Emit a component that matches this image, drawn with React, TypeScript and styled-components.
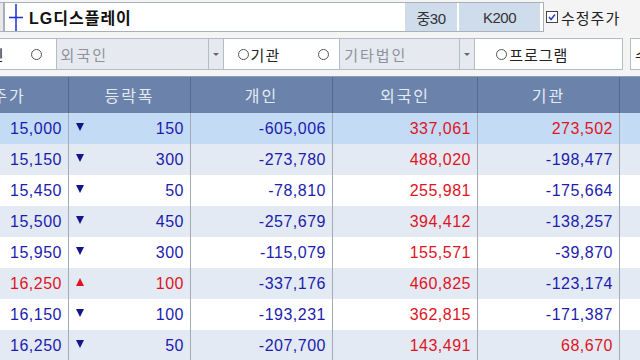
import React from 'react'
import styled, { createGlobalStyle } from 'styled-components'

const GlobalStyle = createGlobalStyle`
    html, body {
        margin: 0;
        padding: 0;
        width: 640px;
        height: 360px;
        overflow: hidden;
        background: #f4f4f4;
        font-family: 'Liberation Sans', 'Noto Sans CJK KR', sans-serif;
    }
`

const Page = styled.div`
    margin-left: -50px;
    width: 760px;
`

const TopBar = styled.div`
    display: flex;
    align-items: center;
    height: 30px;
    padding-top: 2px;
`

const SpinButton = styled.div`
    width: 52px;
    height: 28px;
    background: #e6e8eb;
    border: 1px solid #a9b0b8;
    position: relative;
    &::after {
        content: '';
        position: absolute;
        right: 3px;
        top: 12px;
        border-left: 3px solid #333;
        border-top: 2px solid transparent;
        border-bottom: 2px solid transparent;
    }
`

const InputBox = styled.div`
    box-sizing: border-box;
    width: 540px;
    height: 30px;
    border: 1px solid #a9b0b8;
    background: #fff;
    display: flex;
    align-items: center;
    padding-right: 3px;
`

const StockName = styled.span`
    flex: 1;
    margin-left: 5px;
    font-weight: bold;
    font-size: 16px;
    letter-spacing: 1px;
    color: #111;
`

const IndexButton = styled.div<{ $width: number }>`
    width: ${(p) => p.$width}px;
    height: 28px;
    margin-left: 2px;
    background: #cfdcec;
    display: flex;
    align-items: center;
    justify-content: center;
    font-size: 15px;
    color: #333;
    letter-spacing: -0.5px;
`

const CheckLabel = styled.label`
    display: flex;
    align-items: center;
    margin-left: 2px;
    font-family: 'Noto Sans CJK KR', sans-serif;
    font-size: 15px;
    letter-spacing: 1px;
    color: #222;
`

const CheckBox = styled.span`
    box-sizing: border-box;
    width: 12px;
    height: 12px;
    border: 1px solid #444;
    background: #fff;
    margin-right: 3px;
    display: flex;
    align-items: center;
    justify-content: center;
`

const FilterRow = styled.div`
    display: flex;
    margin-top: 6px;
    height: 32px;
`

const FilterBar = styled.div`
    box-sizing: border-box;
    width: 673px;
    height: 32px;
    border: 1px solid #b4bcc6;
    background: #fff;
    display: flex;
    align-items: stretch;
    font-family: 'Noto Sans CJK KR', sans-serif;
    font-size: 15px;
    color: #222;
`

const FilterItem = styled.div<{ $gap: number }>`
    display: flex;
    align-items: center;
    margin-left: ${(p) => p.$gap}px;
    letter-spacing: 1px;
`

const Radio = styled.span`
    box-sizing: border-box;
    width: 11px;
    height: 11px;
    border: 1px solid #555;
    border-radius: 50%;
    margin-right: 2px;
`

const Select = styled.div<{ $width: number; $gap: number }>`
    box-sizing: border-box;
    width: ${(p) => p.$width}px;
    margin-left: ${(p) => p.$gap}px;
    background: #e6eaf0;
    border-left: 1px solid #b4bcc6;
    display: flex;
    align-items: center;
    padding-left: 4px;
    color: #8d929b;
    letter-spacing: 2px;
`

const SelectArrow = styled.div`
    box-sizing: border-box;
    width: 16px;
    background: #e6eaf0;
    border-left: 1px solid #b4bcc6;
    border-right: 1px solid #b4bcc6;
    display: flex;
    align-items: center;
    justify-content: center;
    &::after {
        content: '';
        border-top: 3px solid #666;
        border-left: 3px solid transparent;
        border-right: 3px solid transparent;
    }
`

const ExtraBox = styled.div`
    box-sizing: border-box;
    margin-left: 7px;
    width: 80px;
    height: 32px;
    border: 1px solid #b4bcc6;
    background: #fff;
    display: flex;
    align-items: center;
    padding-left: 4px;
    font-family: 'Noto Sans CJK KR', sans-serif;
    font-size: 15px;
    color: #222;
`

const COLS = '119px 122px 142px 145px 142px 90px'

const HeaderRow = styled.div`
    display: grid;
    grid-template-columns: ${COLS};
    margin-top: 6px;
    height: 36px;
    background: #6b82aa;
    border-top: 1px solid #8e9cb4;
`

const HeaderCell = styled.div`
    display: flex;
    align-items: center;
    justify-content: center;
    border-right: 1px solid #566a90;
    font-family: 'Noto Sans CJK KR', sans-serif;
    font-size: 16px;
    letter-spacing: 2px;
    color: #e4eaf4;
`

const Row = styled.div<{ $bg: string }>`
    display: grid;
    grid-template-columns: ${COLS};
    height: 31px;
    background: ${(p) => p.$bg};
`

const Cell = styled.div<{ $color?: string }>`
    box-sizing: border-box;
    display: flex;
    align-items: center;
    justify-content: flex-end;
    padding-right: 6px;
    border-right: 1px solid #a3aab6;
    font-size: 16px;
    letter-spacing: 0.5px;
    color: ${(p) => p.$color || '#1c1cae'};
`

const ChangeCell = styled(Cell)`
    justify-content: space-between;
    padding-left: 7px;
`

const Arrow = styled.span<{ $up: boolean }>`
    align-self: flex-start;
    margin-top: 10px;
    border-left: 4px solid transparent;
    border-right: 4px solid transparent;
    ${(p) =>
        p.$up
            ? 'border-bottom: 8px solid #e0141e;'
            : 'border-top: 8px solid #14148f;'}
`

const BLUE = '#1c1cae'
const RED = '#e0141e'

interface RowData {
    price: string
    up: boolean
    change: string
    personal: string
    foreign: string
    inst: string
}

const rows: RowData[] = [
    { price: '15,000', up: false, change: '150', personal: '-605,006', foreign: '337,061', inst: '273,502' },
    { price: '15,150', up: false, change: '300', personal: '-273,780', foreign: '488,020', inst: '-198,477' },
    { price: '15,450', up: false, change: '50', personal: '-78,810', foreign: '255,981', inst: '-175,664' },
    { price: '15,500', up: false, change: '450', personal: '-257,679', foreign: '394,412', inst: '-138,257' },
    { price: '15,950', up: false, change: '300', personal: '-115,079', foreign: '155,571', inst: '-39,870' },
    { price: '16,250', up: true, change: '100', personal: '-337,176', foreign: '460,825', inst: '-123,174' },
    { price: '16,150', up: false, change: '100', personal: '-193,231', foreign: '362,815', inst: '-171,387' },
    { price: '16,250', up: false, change: '50', personal: '-207,700', foreign: '143,491', inst: '68,670' },
]

const signColor = (v: string) => (v.startsWith('-') ? BLUE : RED)

const rowBg = (i: number) => (i === 0 ? '#c4dbf6' : i % 2 === 1 ? '#e3eaf4' : '#ffffff')

const CursorIcon = () => (
    <svg width="16" height="28" viewBox="0 0 16 28" style={{ marginLeft: 3 }}>
        <line x1="8" y1="1" x2="8" y2="28" stroke="#1a2fd0" strokeWidth="1.5" />
        <line x1="1" y1="14.5" x2="15" y2="14.5" stroke="#1a2fd0" strokeWidth="1.5" />
    </svg>
)

export default function App() {
    return (
        <>
            <GlobalStyle />
            <Page>
                <TopBar>
                    <SpinButton />
                    <InputBox>
                        <CursorIcon />
                        <StockName>LG디스플레이</StockName>
                        <IndexButton $width={52}>중30</IndexButton>
                        <IndexButton $width={81}>K200</IndexButton>
                    </InputBox>
                    <CheckLabel>
                        <CheckBox>
                            <svg width="8" height="8" viewBox="0 0 8 8">
                                <polyline points="1,4 3,6.5 7,1.5" fill="none" stroke="#2646c8" strokeWidth="1.6" />
                            </svg>
                        </CheckBox>
                        수정주가
                    </CheckLabel>
                </TopBar>

                <FilterRow>
                    <FilterBar>
                        <FilterItem $gap={11}>
                            <Radio />
                            개인
                        </FilterItem>
                        <FilterItem $gap={26}>
                            <Radio />
                        </FilterItem>
                        <Select $width={152} $gap={12}>외국인</Select>
                        <SelectArrow />
                        <FilterItem $gap={14}>
                            <Radio />
                            기관
                        </FilterItem>
                        <FilterItem $gap={38}>
                            <Radio />
                        </FilterItem>
                        <Select $width={120} $gap={8}>기타법인</Select>
                        <SelectArrow />
                        <FilterItem $gap={21}>
                            <Radio />
                            프로그램
                        </FilterItem>
                    </FilterBar>
                    <ExtraBox>수</ExtraBox>
                </FilterRow>

                <HeaderRow>
                    <HeaderCell>주가</HeaderCell>
                    <HeaderCell>등락폭</HeaderCell>
                    <HeaderCell>개인</HeaderCell>
                    <HeaderCell>외국인</HeaderCell>
                    <HeaderCell>기관</HeaderCell>
                    <HeaderCell />
                </HeaderRow>

                {rows.map((r, i) => (
                    <Row key={i} $bg={rowBg(i)}>
                        <Cell $color={r.up ? RED : BLUE}>{r.price}</Cell>
                        <ChangeCell $color={r.up ? RED : BLUE}>
                            <Arrow $up={r.up} />
                            {r.change}
                        </ChangeCell>
                        <Cell $color={signColor(r.personal)}>{r.personal}</Cell>
                        <Cell $color={signColor(r.foreign)}>{r.foreign}</Cell>
                        <Cell $color={signColor(r.inst)}>{r.inst}</Cell>
                        <Cell />
                    </Row>
                ))}
            </Page>
        </>
    )
}
